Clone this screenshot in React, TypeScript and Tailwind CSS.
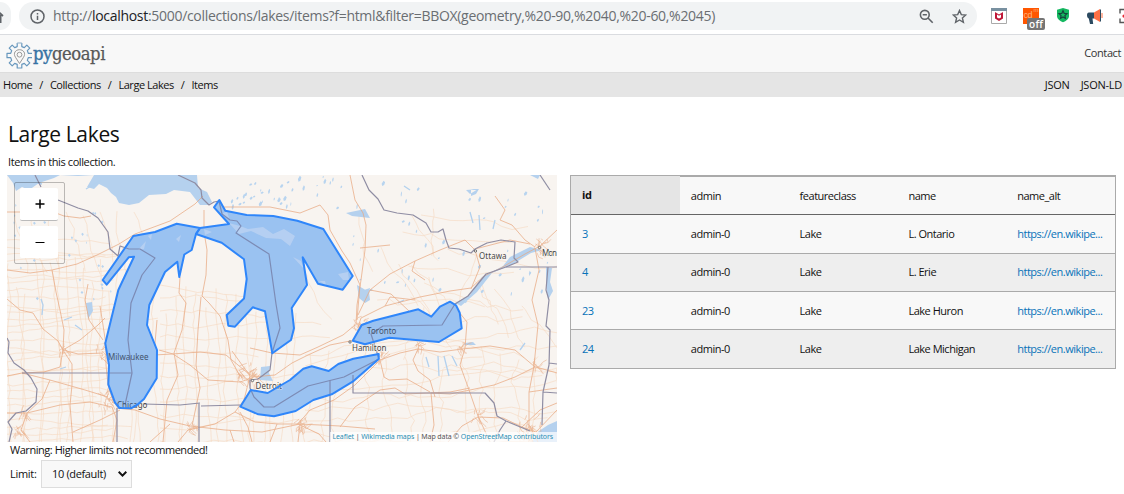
import React from "react";

type Pt = [number, number];

function seeded(seed: number) {
  let s = seed;
  return () => {
    s = (s * 16807) % 2147483647;
    return s / 2147483647;
  };
}

function wander(rand: () => number, x: number, y: number, dx: number, dy: number, steps: number, jitter: number) {
  let d = `M${x.toFixed(1)} ${y.toFixed(1)}`;
  for (let i = 0; i < steps; i++) {
    x += dx + (rand() - 0.5) * jitter;
    y += dy + (rand() - 0.5) * jitter;
    d += `L${x.toFixed(1)} ${y.toFixed(1)}`;
  }
  return d;
}

const rand = seeded(4127);

const minorRoads: string[] = [];
for (let i = 0; i < 30; i++) minorRoads.push(wander(rand, 5, 240 + i * 7.2, 9, 0, 11 + Math.floor(rand() * 6), 4.5));
for (let i = 0; i < 18; i++) minorRoads.push(wander(rand, 8 + i * 8.4, 250 + rand() * 45, 0, 9, 22, 4));
for (let i = 0; i < 13; i++) minorRoads.push(wander(rand, 160, 285 + i * 13, 9, 0, 9 + Math.floor(rand() * 10), 5));
for (let i = 0; i < 14; i++) minorRoads.push(wander(rand, 166 + i * 10, 285 + rand() * 30, 0, 9, 19, 4));
for (let i = 0; i < 14; i++) minorRoads.push(wander(rand, 310 + i * 19, 345 + rand() * 25, 0, 9, 12, 9));
for (let i = 0; i < 9; i++) minorRoads.push(wander(rand, 305, 355 + i * 11, 12, 0, 22, 9));
for (let i = 0; i < 16; i++) minorRoads.push(wander(rand, 270 + rand() * 260, 180 + rand() * 130, 9 * (rand() - 0.3), 8, 7, 9));
for (let i = 0; i < 8; i++) minorRoads.push(wander(rand, 15 + i * 17, 210 + rand() * 10, 2, 9, 7, 6));
for (let i = 0; i < 10; i++) minorRoads.push(wander(rand, 370 + rand() * 80, 215 + i * 17, 12, 1, 9, 10));

const metroStreets: string[] = [];
const metros: [number, number, number][] = [
  [108, 399, 13], [103, 352, 8], [252, 376, 11], [358, 325, 8], [540, 246, 9], [530, 430, 14],
  [300, 425, 9], [18, 430, 6], [190, 428, 6], [418, 346, 5], [462, 349, 5], [380, 357, 5],
  [536, 366, 4], [62, 348, 4], [24, 414, 4], [478, 417, 5], [240, 374, 8],
];
metros.forEach(([cx, cy, r]) => {
  for (let i = 0; i < r * 2; i++) {
    const a = rand() * 6.28;
    const q = rand() * r;
    metroStreets.push(wander(rand, cx + Math.cos(a) * q, cy + Math.sin(a) * q, rand() > 0.5 ? 3 : 0, rand() > 0.5 ? 3 : -2, 2, 3));
  }
});

const ponds: string[] = [];
for (let i = 0; i < 85; i++) {
  const x = 230 + rand() * 320;
  const y = 177 + rand() * (x > 350 ? 125 : 32);
  const w = 0.5 + rand() * 1.5;
  const h = 0.8 + rand() * 2.6;
  ponds.push(`M${x} ${y}l${w} ${-h}l${w * 0.8} ${h * 0.5}l${-w * 0.5} ${h}l${-w} ${h * 0.3}z`);
}
for (let i = 0; i < 35; i++) {
  const x = 10 + rand() * 110;
  const y = 205 + rand() * 100;
  const w = 0.4 + rand() * 1.2;
  ponds.push(`M${x} ${y}l${w} -1.2l${w} 1.5l${-w} 1.6z`);
}

const highways = [
  "M7 299L20 310L33 313L43 329L58 341L63 350L60 367L44 372L22 373",
  "M52 270L56 292L60 310L64 330L63 350L78 354L103 353",
  "M63 350L72 364L72 385L70 405L73 442",
  "M7 376L22 373L50 380L85 390L108 397",
  "M7 413L27 413L60 405L90 402L112 407L117 420L113 442",
  "M117 408L135 410L160 419L190 426L225 430L262 432L300 424L340 426L375 429",
  "M100 306L103 325L106 345L106 365L108 385L113 401",
  "M88 284L85 300L89 320L103 340", "M63 350L80 340L98 325L105 318",
  "M27 413L21 430L30 442M27 413L42 399L50 380M73 432L100 420L120 410",
  "M157 320L154 355L172 354L200 352L226 355L250 375",
  "M159 350L173 354L190 365L208 380L240 382L252 378",
  "M204 210L204 232L207 250L206 275L202 296L209 303L220 316L228 340L231 360L240 376",
  "M201 297L198 330L196 365L200 388L192 426",
  "M250 348L272 353L300 355L318 347L343 335L355 325",
  "M252 377L275 375L292 363L308 355L330 345L350 341L362 338",
  "M232 351L250 376L244 400L235 412L215 424L188 430L178 442",
  "M235 412L255 422L278 424L298 424L310 410L334 400L355 385L380 360L400 353L418 349L440 352L462 349L490 346L515 350L535 367",
  "M358 327L361 318L385 306L420 297L450 291L471 288L484 276L501 268L525 254L540 246L557 230",
  "M535 247L525 240L512 225L500 220L505 210L495 196",
  "M475 250L465 240L440 250L415 261L390 274L370 290L358 315",
  "M350 175L355 200L363 213L366 225L365 250L361 280L357 305L356 325",
  "M214 207L236 207L270 207L300 213L320 205L328 215L330 230L342 251L350 263L360 285L357 320",
  "M455 307L467 322L465 348L460 365L468 387L478 416L490 442",
  "M535 248L539 270L532 300L538 325L534 366L529 392L529 425L538 442",
  "M535 367L515 377L494 385L470 390L450 394L431 393L434 425L430 442",
  "M478 417L462 426L448 442M478 417L503 418L522 427L536 432L557 410",
  "M380 360L384 377L389 380L407 379L430 392M418 349L413 360L418 371L430 380L435 397",
  "M340 427L355 407L380 390L395 388L405 394L450 392L470 388",
  "M300 424L298 442M298 424L319 434L326 442M277 424L270 442",
  "M180 277L179 293L186 303L182 330L174 353L178 375L167 400L163 442",
  "M475 250L480 267L471 289M475 249L510 240L530 244",
  "M390 245L360 248M415 261L412 271L425 280",
  "M7 212L28 212L48 210L64 216L80 218L91 216",
  "M7 270L30 273L52 270L77 264L97 255L119 244L135 234L170 221L195 204L203 196",
  "M370 290L391 294L410 312M385 306L390 297L415 300",
  "M536 367L557 373M529 392L557 388M522 427L540 410L557 403",
  "M230 430L234 442M240 412L248 427L252 442M170 424L150 442",
];

const borders = [
  "M178 175L195 183L201 190L202 198L209 205L214 202L219 201L222 214L230 220L237 221L241 226L236 233L269 254L276 304L280 328L272 353L270 370L258 379L250 380L250 388L254 397L264 407L274 407L308 386L344 377L379 359L371 334L383 326L442 325L455 304L468 296L486 274L506 267L557 267",
  "M58 200L78 208L88 211L98 218L108 232L110 249L118 256L120 246L129 249L140 249L155 258L142 275L131 303L128 340L132 373L125 405M41 187L35 175",
  "M22 373L132 373M117 408L117 442M144 404L180 405L200 403M201 406L240 405M199 403L199 442M330 380L330 442",
  "M353 375L353 393L485 393L494 403L497 416L506 421L530 431M506 421L500 430L494 442",
  "M362 175L369 190L378 199L384 210L397 213L413 215L426 223L431 232L438 232L443 229L446 240L449 248L459 249L471 253L475 249L487 243L501 240L515 242L514 258L518 262L506 267",
  "M7 338L9 342L8 353L14 363L24 370L31 378L37 389L36 402L26 411L16 413L8 422L12 429L9 442",
  "M548 267L546 290L549 300L546 326L550 330L549 365L543 392L542 425M549 363L557 364M543 392L557 393",
  "M540 175L550 190",
];

const waters = [
  "M7 175L13 183L16 191L22 187L29 190L39 183L54 178L60 175ZM60 175L78 176L94 175L87 187L94 189L99 184L107 188L111 193L116 197L119 203L129 205L139 203L149 195L166 194L174 190L190 192L200 205L208 205L212 202L207 192L198 188L197 175Z",
  "M86 303L92 302L93 311L88 319ZM261 367L270 366L269 373L273 381L260 380Z",
  "M357 285L369 292L370 300L365 303L359 298ZM358 292L370 288L368 301Z",
  "M471 190L471 196L476 194L479 189ZM346 213L365 209L370 218L352 216ZM466 190L478 189L470 194Z",
  "M465 343L473 342L476 345L464 345ZM530 175L538 179L540 175Z",
  "M455 303L470 295L482 277L503 266L510 257L530 247L542 250L531 253L513 264L492 273L477 292L461 306Z",
  "M546 267L552 268L550 282L553 291L548 300L546 284ZM539 431L548 425L557 421L557 442L532 442Z",
];

const shallows = "M229 223L240 226L248 229L263 227L273 234L284 229L295 236L290 246L281 239L266 238L251 231L239 234ZM293 257L301 261L304 269ZM319 281L325 281L326 285ZM338 274L348 272L349 280L343 280ZM204 229L212 232L205 235ZM176 239L181 235L179 242ZM220 215L227 211L229 218ZM138 250L146 241L144 249ZM148 236L152 234L151 240Z";

const lakes = {
  michigan: "M133.3 236L155 232L176.7 223.7L200 228L196 234L191.7 250L184.3 254.5L179.3 277L177.3 261.7L165 272L149.3 305L147 325L157 350L156.7 378.3L144 399L137 405L131 408.3L119.3 408L115 402.7L108.3 384.3L109 365L105.3 343.3L118.3 290L134 256.7L128.7 257.3L106.7 284.7L102.7 280Z",
  huron: "M214 207.3L219.3 200L225.3 210.7L246.7 215L273.3 216L297.3 220.7L323.3 229L352.7 276L342.7 289.7L318 283.7L302.7 257.3L307 285L291.7 308L294 328.3L291 340L272.3 353.3L265 311.3L252.7 307.3L235 326.7L228.3 325.7L226.7 315L244 298.5L246.7 279L244 259.3L221.7 242.7L196 234L200 228L229 224Z",
  erie: "M378.7 354L378.7 359L352.7 381.7L331.7 394.3L313.3 400L295.7 411L274 416.3L258.3 414.3L240.3 406.7L250.7 390L267.7 393L290 380L303.3 368.7L311.7 366.3L328.7 371L338.3 364L353.3 358.7Z",
  ontario: "M352.7 340.7L361.7 325L373.3 320.7L418.3 309.3L431.3 316.7L440 306.7L450 301.7L456 305.3L459.7 312.7L461.7 328.3L439 342L389.3 337.7L365 344.3Z",
};
const lakeShapes = Object.values(lakes);

const cities: { name: string; at: Pt; width: number; dot?: Pt; halo?: boolean }[] = [
  { name: "Milwaukee", at: [108, 360], width: 40 },
  { name: "Chicago", at: [117, 408], width: 30 },
  { name: "Detroit", at: [255.5, 389], width: 26, dot: [252.5, 380.5], halo: true },
  { name: "Toronto", at: [367, 333.5], width: 29 },
  { name: "Hamilton", at: [352, 351], width: 34, dot: [350, 342], halo: true },
  { name: "Ottawa", at: [479, 259], width: 27, dot: [475.5, 251], halo: true },
  { name: "Mon", at: [542, 256], width: 14.5, dot: [539.5, 247.5], halo: true },
];

function LakeMap() {
  return (
    <svg className="block h-[267px] w-[550px]" viewBox="7 175 550 267" fill="none">
      <rect x="7" y="175" width="550" height="267" fill="#f8f4f0" />
      <g stroke="#f5d5ba" strokeWidth="0.65" opacity="0.8">
        {minorRoads.map((d, i) => <path key={i} d={d} />)}
      </g>
      <path d={waters.join("")} fill="#b5d1ee" />
      <path d={ponds.join("")} fill="#b8d4ef" />
      <g stroke="#b3d1ee" strokeWidth="1.3">
        <path d="M41 299L43 305L42 315M64 320L72 317M75 325L82 330M426 357L429 367M438 356L439 376M444 356L449 376M452 356L457 366M398 303L404 300M520 350L525 343" />
        <path d="M18 187L30 181L42 184M86 189L101 180M404 186L410 190M479 215L480 230M495 220L493 229M470 212L473 223M60 369L66 367" />
      </g>
      <g stroke="#e8a880" strokeWidth="0.85" strokeLinejoin="round" opacity="0.85">
        {highways.map((d) => <path key={d} d={d} />)}
        {metroStreets.map((d, i) => <path key={i} d={d} strokeWidth="0.6" />)}
      </g>
      <path d={lakeShapes.join("")} fill="#b5d1ee" />
      <path d={shallows} fill="#f8f4f0" opacity="0.5" />
      <g stroke="#8f8da3" strokeWidth="1.2" strokeLinejoin="round">
        {borders.map((d) => <path key={d} d={d} />)}
      </g>
      <g fill="#464646" className="font-['Noto_Sans',sans-serif] text-[8px]">
        {cities.map((c) => (
          <React.Fragment key={c.name}>
            {c.dot && <circle cx={c.dot[0]} cy={c.dot[1]} r="1.2" fill="#f8f4f0" stroke="#555" strokeWidth="0.8" />}
            <text
              x={c.at[0]}
              y={c.at[1]}
              textLength={c.width}
              stroke={c.halo ? "#f8f4f0" : "none"}
              strokeWidth="1.2"
              paintOrder="stroke"
            >
              {c.name}
            </text>
          </React.Fragment>
        ))}
      </g>
      <g fill="#3388ff" fillOpacity="0.2" stroke="#2f86fa" strokeWidth="2" strokeLinejoin="round">
        {lakeShapes.map((d) => <path key={d} d={d} />)}
      </g>
    </svg>
  );
}

function BrowserBar() {
  return (
    <div className="flex h-[35px] shrink-0 items-start overflow-hidden border-b border-[#dadce0] bg-white pt-[2px]">
      <div className="flex h-7 w-[11px] items-center justify-end overflow-hidden rounded-r-full bg-[#f1f3f4]">
        <svg className="h-4 w-4 shrink-0 -translate-x-[6px]" viewBox="0 0 16 16" fill="none" stroke="#5f6368" strokeWidth="1.8">
          <path d="M2 8L8 2.5L14 8M4.4 7V14H6.5V10H9.5V14H11.6V7" />
        </svg>
      </div>
      <div className="ml-2 flex h-7 w-[958px] items-center rounded-full bg-[#f1f3f4] pl-[11px]">
        <svg className="h-[15px] w-[15px]" viewBox="0 0 15 15" fill="none" stroke="#5f6368" strokeWidth="1.5">
          <circle cx="7.5" cy="7.5" r="6.5" />
          <path d="M7.5 6.7V11M7.5 4V5.5" />
        </svg>
        <span className="ml-[8px] whitespace-nowrap font-['Open_Sans',sans-serif] text-[14px] leading-7 tracking-[-0.3px] text-[#6a6e72]">
          http://<span className="text-[#202124]">localhost</span>:5000/collections/lakes/items?f=html&amp;filter=BBOX(geometry,%20-90,%2040,%20-60,%2045)
        </span>
        <div className="ml-auto flex items-center gap-[18px] pr-[10px]">
          <svg className="h-[15px] w-[15px]" viewBox="0 0 15 15" fill="none" stroke="#5f6368" strokeWidth="1.6">
            <circle cx="5.8" cy="5.8" r="4.4" />
            <path d="M9 9L13.7 13.7M3.7 5.8H7.9" />
          </svg>
          <svg className="h-[15px] w-[15px]" viewBox="0 0 15 15" fill="none" stroke="#5f6368" strokeWidth="1.4">
            <path d="M7.5 1.5L9.3 5.6L13.8 6L10.4 9L11.4 13.3L7.5 11L3.6 13.3L4.6 9L1.2 6L5.7 5.6Z" />
          </svg>
        </div>
      </div>
      <svg className="ml-[11px] h-8 w-[136px]" viewBox="988 2 136 32" fill="none">
        <path d="M991.5 8.5H1006.5V23.5H991.5Z" fill="#fff" stroke="#aaa" />
        <path d="M991 8H1007V11H991Z" fill="#7890a0" />
        <path d="M995 12L999 14.5L1003 12V18.5L999 21L995 18.5Z" fill="#c01838" />
        <path d="M997 14.5L999 15.8L1001 14.5V17.4L999 18.6L997 17.4Z" fill="#fff" />
        <rect x="1023" y="8" width="16" height="16" fill="#ff5600" />
        <text x="1023.5" y="17.5" fill="#ffb27d" className="font-['Liberation_Sans',sans-serif] text-[9px]">cd</text>
        <text x="1033.5" y="12" fill="#ffb27d" className="font-['Liberation_Sans',sans-serif] text-[6px]">m</text>
        <rect x="1027" y="18" width="18" height="12" rx="2" fill="#757575" />
        <text x="1029" y="28" textLength="13.5" fill="#fff" className="font-['Open_Sans',sans-serif] text-[10px] font-semibold">off</text>
        <path d="M1063 8L1069 9.7V16C1069 19 1066 21 1063 22.3C1060 21 1057 19 1057 16V9.7Z" fill="#14b860" />
        <path d="M1063 10.8L1064.2 13.4L1067 13.7L1064.9 15.6L1065.5 18.4L1063 17L1060.5 18.4L1061.1 15.6L1059 13.7L1061.8 13.4Z" stroke="#18443d" strokeWidth="1.2" />
        <path d="M1087 15C1087 13 1088 12.5 1090 12.5H1094V18.5H1092.5L1093.2 24H1090L1088.8 18.5C1087.5 18 1087 17 1087 15Z" fill="#2c4a60" />
        <path d="M1094 12.5L1100 9V22L1094 18.5Z" fill="#ff7045" />
        <path d="M1100 9L1101 10V21L1100 22Z" fill="#2c4a60" />
        <path d="M1102 13V18" stroke="#ff7045" />
        <path d="M1124 9.5H1120V13.5M1120 18.5V22.5H1124" stroke="#555" strokeWidth="1.4" />
        <path d="M1124 14.5A1.6 1.6 0 0 0 1124 17.7Z" fill="#e52b35" />
      </svg>
    </div>
  );
}

function Logo() {
  return (
    <div className="flex items-center">
      <svg className="h-[27px] w-[27px]" viewBox="0 0 27 27" fill="none" stroke="#6797bd" strokeWidth="1.2" strokeLinejoin="round">
        <path d="M11.2 1V4.6L8.7 5.6L6.2 3.1L3.2 6.1L5.7 8.6L4.7 11.3H1V15.7H4.7L5.7 18.4L3.2 20.9L6.2 23.9L8.7 21.4L11.2 22.4V26H15.8V22.4L18.3 21.4L20.8 23.9L23.8 20.9L21.3 18.4L22.3 15.7H26M26 11.3H22.3L21.3 8.6L23.8 6.1L20.8 3.1L18.3 5.6L15.8 4.6V1" />
        <path d="M11.2 1H15.8" stroke="#9bb9d0" />
        <path d="M13.5 21.5L9.5 15.3C6.8 11.3 9.5 7.7 13.5 7.7S20.2 11.3 17.5 15.3Z" stroke="#999" strokeWidth="1" />
        <circle cx="13.5" cy="12.7" r="2.4" stroke="#999" strokeWidth="1" />
      </svg>
      <svg className="-ml-px h-[27px] w-[76px]" viewBox="0 0 76 27">
        <text x="1" y="17.5" textLength="72" lengthAdjust="spacingAndGlyphs" fill="#585858" stroke="#585858" strokeWidth="0.25" className="font-['DejaVu_Serif_Condensed','DejaVu_Serif',serif] text-[18.5px]">
          <tspan fill="#3672a4" stroke="#3672a4" strokeWidth="0.4">py</tspan>geoapi
        </text>
      </svg>
    </div>
  );
}

const columns = ["id", "admin", "featureclass", "name", "name_alt"];
const rows = [
  { id: "3", name: "L. Ontario", box: "h-[39px] leading-[38px] border-b bg-[#f8f8f8]" },
  { id: "4", name: "L. Erie", box: "h-[38px] leading-[36px] border-b bg-[#eee]" },
  { id: "23", name: "Lake Huron", box: "h-[38px] leading-[38px] border-b bg-[#f8f8f8]" },
  { id: "24", name: "Lake Michigan", box: "h-[38px] leading-[38px] bg-[#eee]" },
];

function ItemsTable() {
  return (
    <div className="w-[546px] border border-[#aaa] tracking-[-0.48px]">
      <div className="grid h-[39px] grid-cols-5 border-b border-[#666] bg-[#f8f8f8] leading-[38px]">
        {columns.map((c, i) => (
          <div key={c} className={i === 0 ? "h-[38px] bg-[#e5e5e5] pl-[11px] font-bold" : "h-[38px] border-t border-[#aaa] pl-[11px]"}>
            {c}
          </div>
        ))}
      </div>
      {rows.map((r) => (
        <div key={r.id} className={`grid grid-cols-5 border-[#aaa] ${r.box}`}>
          <div className="pl-[11px] text-[#0772b9]">{r.id}</div>
          <div className="pl-[11px]">admin-0</div>
          <div className="pl-[11px]">Lake</div>
          <div className="pl-[11px]">{r.name}</div>
          <div className="pl-[11px] text-[#0772b9]">https://en.wikipe...</div>
        </div>
      ))}
    </div>
  );
}

export default function App() {
  return (
    <div className="flex h-[494px] w-[1124px] flex-col overflow-hidden bg-white font-['Open_Sans',sans-serif] text-[11px] tracking-[-0.45px] text-[#111]">
      <BrowserBar />
      <header className="flex h-[38px] shrink-0 items-center justify-between border-b border-[#ddd] bg-[#f8f8f8] pl-[6px] pr-[3px]">
        <div className="pt-[3px]"><Logo /></div>
        <span className="tracking-[-0.4px] text-[#333]">Contact</span>
      </header>
      <nav className="flex h-6 shrink-0 items-center justify-between bg-[#e5e5e5] pl-[3px] pr-[2px]">
        <div className="flex gap-[7px]">
          <span>Home</span><span>/</span><span>Collections</span><span>/</span><span>Large Lakes</span><span>/</span><span>Items</span>
        </div>
        <div className="flex gap-[11px] tracking-[-0.25px]"><span>JSON</span><span>JSON-LD</span></div>
      </nav>
      <main className="flex flex-col pl-[7px]">
        <h1 className="mt-[22px] h-[30px] pl-px text-[21px] font-medium leading-[30px] tracking-[-0.35px]">Large Lakes</h1>
        <p className="mt-[5px] h-[21px] pl-px leading-4 tracking-[-0.4px]">Items in this collection.</p>
        <div className="flex items-start gap-[13px]">
          <section className="w-[550px]">
            <div className="relative h-[267px]">
              <LakeMap />
              <div className="absolute left-[7px] top-[7px] flex h-[82px] w-[51px] flex-col gap-[5px] rounded-[2px] border border-black/25 p-[5px]">
                <button className="flex h-[33px] w-[38px] items-center justify-center rounded-[2px] border-b border-[#bbb] bg-white pl-[2px]">
                  <svg className="h-[10px] w-[10px]" viewBox="0 0 10 10" stroke="#000" strokeWidth="1.5"><path d="M5 0.5V9.5M0.5 5H9.5" /></svg>
                </button>
                <button className="flex h-8 w-[38px] items-center justify-center rounded-[2px] bg-white pl-[2px]">
                  <svg className="h-[10px] w-[10px]" viewBox="0 0 10 10" stroke="#000" strokeWidth="1"><path d="M0.5 5.5H9.5" /></svg>
                </button>
              </div>
              <div className="absolute bottom-0 right-0 h-[10px] whitespace-nowrap bg-white/70 pl-[2px] pr-[4px] font-['Noto_Sans',sans-serif] text-[7px] leading-[10px] tracking-[-0.1px] text-[#555]">
                <span className="text-[#2a8fb5]">Leaflet</span> | <span className="text-[#2a8fb5]">Wikimedia maps</span> | Map data © <span className="text-[#2a8fb5]">OpenStreetMap contributors</span>
              </div>
            </div>
            <div className="h-[18px] pl-[3px] leading-4">Warning: Higher limits not recommended!</div>
            <div className="flex h-7 items-center pl-[3px]">
              <span className="w-[31px] tracking-[-0.3px]">Limit:</span>
              <div className="flex h-7 w-[91px] items-center justify-between border border-[#ddd] bg-[#f8f8f8] pl-[10px] pr-1">
                <span className="tracking-[-0.35px]">10 (default)</span>
                <svg className="h-[6px] w-[9px]" viewBox="0 0 9 6" fill="none" stroke="#111" strokeWidth="2"><path d="M0.7 0.8L4.5 4.6L8.3 0.8" /></svg>
              </div>
            </div>
          </section>
          <ItemsTable />
        </div>
      </main>
    </div>
  );
}
